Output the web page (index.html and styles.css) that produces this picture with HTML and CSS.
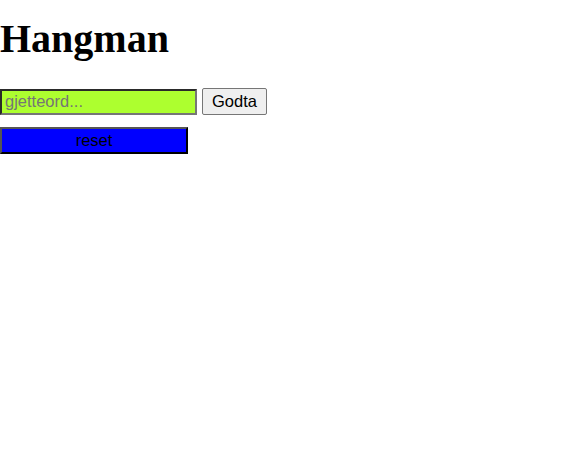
FILE: index.html
```html
<!DOCTYPE html>
<html>
<head>
<meta charset="utf-8">
<title>Hangman</title>
<link rel="stylesheet" href="styles.css">
</head>
<body>
<h1 class="title">Hangman</h1>
<div class="guess-row">
  <input class="guess-input" type="text" placeholder="gjetteord...">
  <button class="accept-btn">Godta</button>
</div>
<button class="reset-btn">reset</button>
</body>
</html>
```
FILE: styles.css
```css
body {
  margin: 0;
  background: #ffffff;
  font-family: "Liberation Serif", "Times New Roman", serif;
}
.title {
  font-family: "Liberation Serif", "Times New Roman", serif;
  font-size: 40px;
  font-weight: bold;
  line-height: 46px;
  margin: 16px 0 0 0;
  color: #000;
}
.guess-row {
  display: flex;
  align-items: center;
  gap: 5px;
  margin-top: 26px;
  height: 27px;
}
.guess-input {
  box-sizing: border-box;
  width: 197px;
  height: 26px;
  margin: 0;
  padding: 0 3px;
  background: #adff2f;
  border-style: solid;
  border-width: 2px;
  border-color: #2a2a2a #767676 #767676 #2a2a2a;
  font-family: "Liberation Sans", Arial, sans-serif;
  font-size: 16.5px;
  color: #000;
  outline: none;
}
.guess-input::placeholder {
  color: #757575;
}
.accept-btn {
  box-sizing: border-box;
  width: 65px;
  height: 27px;
  margin: 0;
  padding: 0;
  background: #efefef;
  border: 1px solid #767676;
  border-radius: 2px;
  font-family: "Liberation Sans", Arial, sans-serif;
  font-size: 16.5px;
  color: #000;
}
.reset-btn {
  display: block;
  box-sizing: border-box;
  width: 188px;
  height: 27px;
  margin: 12px 0 0 0;
  padding: 0;
  background: #0000ff;
  border-style: solid;
  border-width: 2px;
  border-color: #555555 #000000 #000000 #555555;
  font-family: "Liberation Sans", Arial, sans-serif;
  font-size: 16.5px;
  color: #000;
}
```
